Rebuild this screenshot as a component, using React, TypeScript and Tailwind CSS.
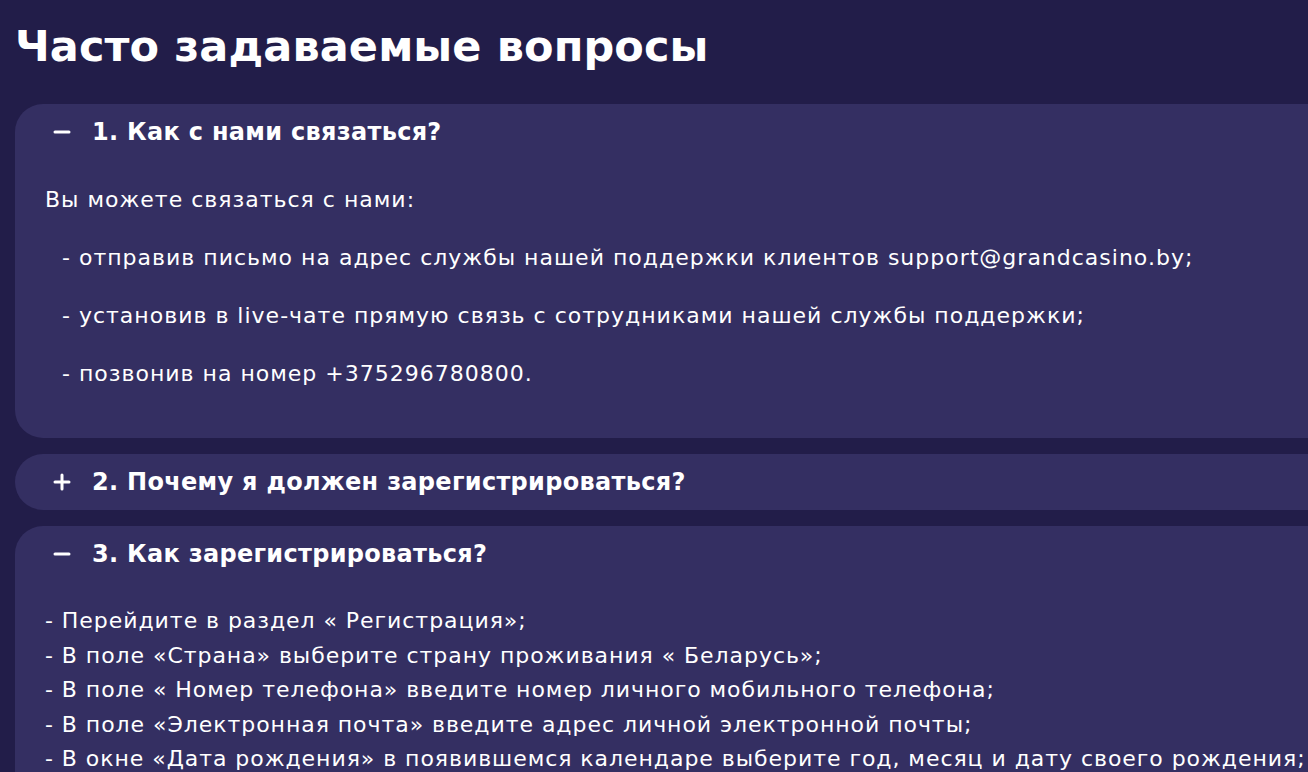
import { Minus, Plus } from "lucide-react";

const font = { fontFamily: '"DejaVu Sans", "Open Sans", sans-serif' };

function FaqCard({
  title,
  open,
  children,
}: {
  title: string;
  open: boolean;
  children?: React.ReactNode;
}) {
  return (
    <div className="bg-[#342f62] rounded-[28px] -mr-10">
      <div className="flex items-center h-[56px] pl-[35px]">
        <span className="w-[42px] flex items-center text-white">
          {open ? <Minus size={24} strokeWidth={3} /> : <Plus size={24} strokeWidth={3} />}
        </span>
        <span className="text-white text-[24px] font-bold tracking-[0.3px]">{title}</span>
      </div>
      {open && children}
    </div>
  );
}

export default function App() {
  return (
    <div className="min-h-screen bg-[#221d49] overflow-hidden pl-[15px] pt-[16px] pb-10" style={font}>
      <h1 className="text-white text-[43px] font-bold leading-[60px] tracking-[0.1px]">
        Часто задаваемые вопросы
      </h1>
      <div className="mt-[28px] flex flex-col gap-[16px]">
        <FaqCard title="1. Как с нами связаться?" open>
          <div className="px-[30px] pt-[25px] pb-[49px] text-white text-[22px] tracking-[1px]">
            <p className="leading-[30px]">Вы можете связаться с нами:</p>
            <p className="leading-[30px] mt-[28px] pl-[17px]">
              - отправив письмо на адрес службы нашей поддержки клиентов support@grandcasino.by;
            </p>
            <p className="leading-[30px] mt-[28px] pl-[17px]">
              - установив в live-чате прямую связь с сотрудниками нашей службы поддержки;
            </p>
            <p className="leading-[30px] mt-[28px] pl-[17px]">- позвонив на номер +375296780800.</p>
          </div>
        </FaqCard>
        <FaqCard title="2. Почему я должен зарегистрироваться?" open={false} />
        <FaqCard title="3. Как зарегистрироваться?" open>
          <div className="px-[30px] pt-[22px] pb-[40px] text-white text-[22px] tracking-[0.95px] leading-[34.5px] whitespace-nowrap">
            <p>- Перейдите в раздел « Регистрация»;</p>
            <p>- В поле «Страна» выберите страну проживания « Беларусь»;</p>
            <p>- В поле « Номер телефона» введите номер личного мобильного телефона;</p>
            <p>- В поле «Электронная почта» введите адрес личной электронной почты;</p>
            <p>- В окне «Дата рождения» в появившемся календаре выберите год, месяц и дату своего рождения;</p>
          </div>
        </FaqCard>
      </div>
    </div>
  );
}
